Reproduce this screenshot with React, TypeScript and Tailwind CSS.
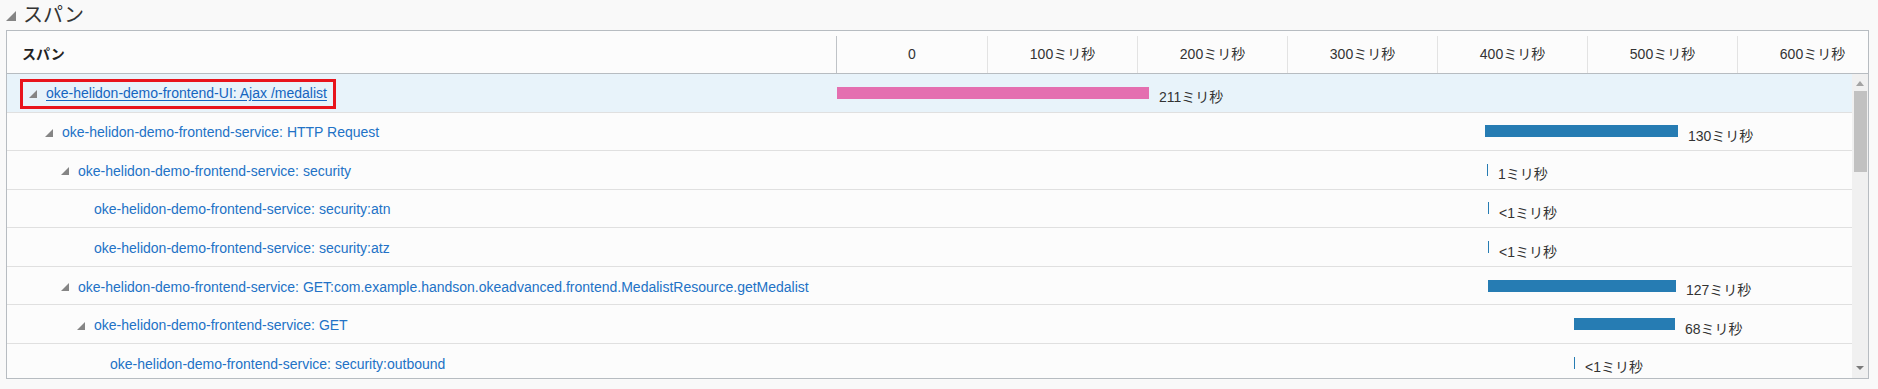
type Span = {
  level: number;
  name: string;
  expandable: boolean;
  start: number;
  width: number;
  label: string;
  pink?: boolean;
  selected?: boolean;
};

const SVC = 'oke-helidon-demo-frontend-service: ';

const spans: Span[] = [
  { level: 0, name: 'oke-helidon-demo-frontend-UI: Ajax /medalist', expandable: true, start: 0, width: 312, label: '211ミリ秒', pink: true, selected: true },
  { level: 1, name: SVC + 'HTTP Request', expandable: true, start: 648, width: 193, label: '130ミリ秒' },
  { level: 2, name: SVC + 'security', expandable: true, start: 650, width: 1, label: '1ミリ秒' },
  { level: 3, name: SVC + 'security:atn', expandable: false, start: 651, width: 1, label: '<1ミリ秒' },
  { level: 3, name: SVC + 'security:atz', expandable: false, start: 651, width: 1, label: '<1ミリ秒' },
  { level: 2, name: SVC + 'GET:com.example.handson.okeadvanced.frontend.MedalistResource.getMedalist', expandable: true, start: 651, width: 188, label: '127ミリ秒' },
  { level: 3, name: SVC + 'GET', expandable: true, start: 737, width: 101, label: '68ミリ秒' },
  { level: 4, name: SVC + 'security:outbound', expandable: false, start: 737, width: 1, label: '<1ミリ秒' },
];

const ticks = ['0', '100ミリ秒', '200ミリ秒', '300ミリ秒', '400ミリ秒', '500ミリ秒', '600ミリ秒'];

function Expanded({ size = 7 }: { size?: number }) {
  return (
    <svg width={size} height={size} viewBox="0 0 10 10" className="shrink-0">
      <polygon points="10,0 10,10 0,10" fill="#858585" />
    </svg>
  );
}

function SpanName({ span }: { span: Span }) {
  return (
    <>
      <span className="w-[7px] shrink-0 flex items-center">{span.expandable && <Expanded size={8} />}</span>
      <span
        className={
          'ml-[10px] whitespace-nowrap ' +
          (span.selected ? 'text-[#1565c0] underline underline-offset-2' : 'text-[#2272c6]')
        }
      >
        {span.name}
      </span>
    </>
  );
}

function Row({ span }: { span: Span }) {
  return (
    <div
      className={
        'flex h-[38.57px] shrink-0 border-b border-[#e0e0e0] ' + (span.selected ? 'bg-[#e8f3fa]' : '')
      }
    >
      <div
        className="w-[830px] shrink-0 flex items-center pt-[3px] text-[14px]"
        style={{ paddingLeft: span.selected ? 13 : 22 + span.level * 16 }}
      >
        {span.selected ? (
          <div className="flex items-center h-[30px] -mt-[1px] border-[3px] border-[#e8141c] pl-[6px] pr-[6px]">
            <SpanName span={span} />
          </div>
        ) : (
          <SpanName span={span} />
        )}
      </div>
      <div className="flex-1 flex items-center">
        <div
          className={'h-[12px] shrink-0 ' + (span.pink ? 'bg-[#e46fb0]' : 'bg-[#267cb3]')}
          style={{ marginLeft: span.start, width: span.width }}
        />
        <span className="ml-[10px] pt-[10px] text-[14px] text-[#333] whitespace-nowrap">{span.label}</span>
      </div>
    </div>
  );
}

export default function App() {
  return (
    <div
      className="w-[1878px] h-[389px] bg-[#f9f9f9] overflow-hidden"
      style={{ fontFamily: '"Liberation Sans", "Noto Sans CJK JP", sans-serif' }}
    >
      <div className="h-[30px] flex items-center pl-[6px]">
        <span className="pt-[2px]">
          <Expanded size={10} />
        </span>
        <span className="ml-[7px] text-[20px] text-[#333] leading-none">スパン</span>
      </div>

      <div className="ml-[6px] w-[1863px] h-[349px] border border-[#b7bcc1] bg-[#fcfcfc] flex flex-col overflow-hidden">
        {/* header */}
        <div className="h-[43px] shrink-0 flex border-b border-[#b7bcc1] overflow-hidden">
          <div className="w-[829px] shrink-0 flex items-center pl-[15px] pt-[5px] text-[14px] font-bold text-[#222]">
            スパン
          </div>
          <div className="w-px shrink-0 mt-[5px] bg-[#bfc3c7]" />
          {ticks.map((t, i) => (
            <div key={t} className="flex shrink-0">
              {i > 0 && <div className="w-px mt-[5px] bg-[#e3e3e3]" />}
              <div
                className={
                  'flex items-center justify-center pt-[5px] text-[14px] text-[#333] whitespace-nowrap ' +
                  (i === 0 ? 'w-[150px]' : 'w-[149px]')
                }
              >
                {t}
              </div>
            </div>
          ))}
        </div>

        {/* body */}
        <div className="flex-1 flex min-h-0">
          <div className="flex-1 flex flex-col overflow-hidden">
            {spans.map((s, i) => (
              <Row key={i} span={s} />
            ))}
          </div>
          <div className="w-[16px] shrink-0 bg-[#f0f0f0] flex flex-col items-center">
            <div className="h-[17px] flex items-center justify-center pt-px">
              <svg width="8" height="5" viewBox="0 0 8 5">
                <polygon points="4,0 8,5 0,5" fill="#a3a3a3" />
              </svg>
            </div>
            <div className="w-[13px] h-[81px] bg-[#c1c1c1]" />
            <div className="flex-1" />
            <div className="h-[16px] flex items-start justify-center pt-[4px]">
              <svg width="8" height="4" viewBox="0 0 8 4">
                <polygon points="0,0 8,0 4,4" fill="#7a7a7a" />
              </svg>
            </div>
          </div>
        </div>
      </div>
    </div>
  );
}
